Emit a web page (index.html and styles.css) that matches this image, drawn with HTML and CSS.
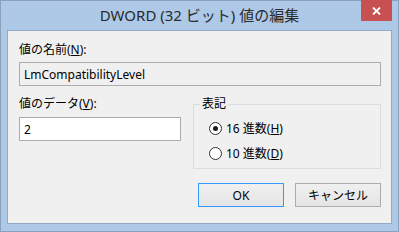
FILE: index.html
```html
<!DOCTYPE html>
<html lang="ja">
<head>
    <meta charset="UTF-8">
    <title>DWORD (32 ビット) 値の編集</title>
    <link rel="stylesheet" href="styles.css">
</head>
<body>
    <div class="window">
        <div class="titlebar">
            <span></span>
            <div class="title">DWORD (32 ビット) 値の編集</div>
            <button class="close" aria-label="閉じる">
                <svg width="9" height="8" viewBox="0 0 9 8">
                    <path d="M1 0.5 L8 7.5 M8 0.5 L1 7.5" stroke="#fff" stroke-width="1.8" fill="none"/>
                </svg>
            </button>
        </div>

        <div class="client">
            <label class="label">値の名前(<u>N</u>):</label>
            <input class="field readonly" value="LmCompatibilityLevel" readonly>

            <div class="row">
                <div class="data">
                    <label class="label">値のデータ(<u>V</u>):</label>
                    <input class="field" value="2">
                </div>
                <fieldset class="base">
                    <legend>表記</legend>
                    <div class="radio"><span class="dot checked"></span>16 進数(<u>H</u>)</div>
                    <div class="radio"><span class="dot"></span>10 進数(<u>D</u>)</div>
                </fieldset>
            </div>

            <div class="actions">
                <button class="btn default">OK</button>
                <button class="btn">キャンセル</button>
            </div>
        </div>
    </div>
</body>
</html>
```

FILE: styles.css
```css
* {
    margin: 0;
    padding: 0;
    box-sizing: border-box;
}

body {
    font-family: 'Noto Sans', 'Noto Sans CJK JP', sans-serif;
    font-size: 12px;
    color: #000;
}

.window {
    width: 399px;
    height: 232px;
    display: flex;
    flex-direction: column;
    background: #adc9e7;
    border: 1px solid #8aa0bb;
}

.titlebar {
    height: 29px;
    display: grid;
    grid-template-columns: 1fr auto 1fr;
}

.title {
    line-height: 29px;
    font-size: 15px;
    color: #2b2b2b;
    white-space: nowrap;
}

.close {
    justify-self: end;
    align-self: start;
    width: 31px;
    height: 21px;
    margin-top: -1px;
    margin-right: 6px;
    border: none;
    background: #c75050;
    display: flex;
    align-items: center;
    justify-content: center;
}

.client {
    flex: 1;
    margin: 0 6px 7px;
    background: #f0f0f0;
    border: 1px solid #93a9c4;
    padding: 12px 10px 0 11px;
    display: flex;
    flex-direction: column;
}

.label {
    display: block;
    line-height: 14px;
    height: 14px;
}

.field {
    display: block;
    height: 24px;
    border: 1px solid #abadb3;
    background: #fff;
    padding: 0 4px;
    font: inherit;
    font-size: 12px;
    color: #000;
    outline: none;
}

.client > .field {
    margin-top: 5px;
    width: 100%;
}

.field.readonly {
    background: #f0f0f0;
    border-color: #adadad;
}

.row {
    display: flex;
    gap: 12px;
    margin-top: 11px;
}

.data {
    width: 162px;
}

.data .field {
    width: 100%;
    margin-top: 6px;
}

.base {
    flex: 1;
    border: 1px solid #dcdcdc;
    padding: 11px 0 8px 15px;
    display: flex;
    flex-direction: column;
    gap: 12px;
}

.base legend {
    margin-left: -9px;
    padding: 0 2px;
    line-height: 14px;
}

.radio {
    display: flex;
    align-items: center;
    height: 13px;
    line-height: 13px;
    white-space: nowrap;
}

.dot {
    width: 13px;
    height: 13px;
    border: 1px solid #333;
    border-radius: 50%;
    background: #fff;
    margin-right: 4px;
    display: flex;
    align-items: center;
    justify-content: center;
}

.dot.checked::after {
    content: '';
    width: 5px;
    height: 5px;
    border-radius: 50%;
    background: #1a1a1a;
}

.actions {
    display: flex;
    justify-content: flex-end;
    gap: 11px;
    margin-top: 14px;
}

.btn {
    width: 86px;
    height: 24px;
    border: 1px solid #acacac;
    background: linear-gradient(#f0f0f0, #e5e5e5);
    font: inherit;
    font-size: 12px;
    color: #000;
}

.btn.default {
    border-color: #3399ff;
}
```
